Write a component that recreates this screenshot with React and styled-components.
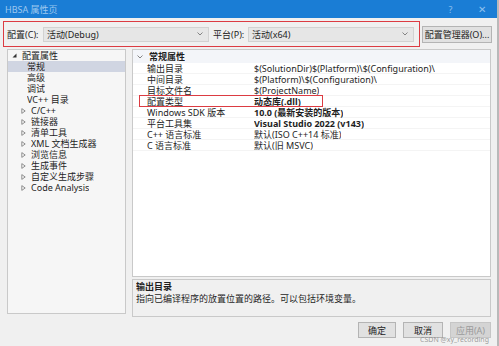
import React from "react";
import styled, { createGlobalStyle } from "styled-components";

const Global = createGlobalStyle`
  html, body { margin: 0; padding: 0; background: #f0f0f0; }
  body { font-family: "Segoe UI", "Noto Sans", "Noto Sans CJK SC", sans-serif; font-size: 9px; color: #1e1e1e; }
  * { box-sizing: border-box; }
`;

const Window = styled.div`
  position: relative;
  width: 499px;
  height: 346px;
  background: #f0f0f0;
  border-right: 2px solid #b9b9b9;
  display: flex;
  flex-direction: column;
  overflow: hidden;
`;

const TitleBar = styled.div`
  height: 18px;
  background: #1a7dd5;
  display: flex;
  align-items: center;
  padding: 0 0 0 5px;
  color: #9fc8ef;
  font-size: 9px;
`;

const TitleText = styled.span`
  flex: 1;
`;

const TitleBtn = styled.span`
  width: 31px;
  text-align: center;
  color: #8fc0ef;
  font-size: ${(p) => p.$size || 9}px;
`;

const Toolbar = styled.div`
  display: flex;
  align-items: center;
  padding: 3px 0 0 3px;
  gap: 2px;
  height: 29px;
`;

const Highlight = styled.div`
  display: flex;
  align-items: center;
  width: 417px;
  height: 26px;
  border: 1.5px solid #dc3b42;
  padding: 0 4px 0 3px;
  gap: 4px;
`;

const Label = styled.span`
  white-space: nowrap;
  width: ${(p) => p.$w}px;
`;

const Select = styled.div`
  width: 166px;
  height: 15px;
  background: #e6e6e6;
  border: 1px solid #d2d2d2;
  display: flex;
  align-items: center;
  padding: 0 5px 0 3px;
  justify-content: space-between;
`;

const Button = styled.div`
  height: ${(p) => p.$h || 16}px;
  width: ${(p) => p.$w}px;
  background: ${(p) => (p.$disabled ? "#d4d4d4" : "#e1e1e1")};
  border: 1px solid ${(p) => (p.$disabled ? "#c6c6c6" : "#b4b4b4")};
  color: ${(p) => (p.$disabled ? "#9a9a9a" : "#1e1e1e")};
  display: flex;
  align-items: center;
  justify-content: center;
  white-space: nowrap;
`;

const Body = styled.div`
  display: flex;
  padding: 2px 0 0 7px;
  gap: 6px;
`;

const Tree = styled.div`
  width: 119px;
  height: 265px;
  background: #f6f6f6;
  border: 1px solid #c9c9c9;
`;

const TreeRow = styled.div`
  height: 11px;
  display: flex;
  align-items: center;
  padding-left: ${(p) => p.$indent}px;
  background: ${(p) => (p.$selected ? "#d0d5e2" : "transparent")};
  white-space: nowrap;
`;

const Cell = styled.span`
  display: block;
  height: 11px;
  line-height: 11px;
  overflow: hidden;
  white-space: nowrap;
  width: ${(p) => (p.$w ? `${p.$w}px` : "auto")};
  padding-left: ${(p) => p.$pl || 0}px;
  flex-shrink: 0;
  font-weight: ${(p) => (p.$bold ? 700 : "inherit")};
`;

const Arrow = styled.span`
  width: 6px;
  display: inline-flex;
  align-items: center;
  margin-right: 4px;
`;

const RightCol = styled.div`
  width: 359px;
  display: flex;
  flex-direction: column;
  gap: 2px;
`;

const Grid = styled.div`
  height: 228px;
  background: #ffffff;
  border: 1px solid #c9c9c9;
`;

const GridHeader = styled.div`
  height: 13px;
  display: flex;
  align-items: center;
  padding-left: 4px;
  background: #f3f5f9;
  font-weight: 600;
  gap: 6px;
`;

const GridRow = styled.div`
  position: relative;
  height: 11px;
  display: flex;
  align-items: center;
  border-bottom: 1px solid #f4f4f4;
`;

const RowMark = styled.span`
  position: absolute;
  left: 6px;
  top: -1px;
  width: 184px;
  height: 12px;
  border: 1.5px solid #dc3b42;
  pointer-events: none;
`;

const Desc = styled.div`
  height: 38px;
  border: 1px solid #c9c9c9;
  background: #f0f0f0;
  padding: 1px 0 0 3px;
`;

const DescLine = styled.div`
  height: 12px;
  line-height: 12px;
  overflow: hidden;
  white-space: nowrap;
  font-weight: ${(p) => (p.$bold ? 700 : 400)};
`;

const Footer = styled.div`
  display: flex;
  justify-content: flex-end;
  gap: 7px;
  padding: 5px 6px 0 0;
`;

const Watermark = styled.span`
  position: absolute;
  right: 8px;
  bottom: 2px;
  font-size: 7px;
  line-height: 8px;
  color: rgba(140, 140, 140, 0.85);
  white-space: nowrap;
`;

const Chevron = () => (
  <svg width="6" height="4" viewBox="0 0 6 4">
    <path d="M0.5 0.5 L3 3 L5.5 0.5" fill="none" stroke="#777" strokeWidth="0.9" />
  </svg>
);

const Expanded = () => (
  <svg width="5" height="5" viewBox="0 0 5 5">
    <path d="M4.5 0.5 L4.5 4.5 L0.5 4.5 Z" fill="#333" />
  </svg>
);

const Collapsed = () => (
  <svg width="5" height="6" viewBox="0 0 5 6">
    <path d="M0.8 0.6 L4.2 3 L0.8 5.4 Z" fill="none" stroke="#777" strokeWidth="0.8" />
  </svg>
);

const treeItems = [
  { t: "配置属性", indent: 4, arrow: "exp" },
  { t: "常规", indent: 19, selected: true },
  { t: "高级", indent: 19 },
  { t: "调试", indent: 19 },
  { t: "VC++ 目录", indent: 19 },
  { t: "C/C++", indent: 13, arrow: "col" },
  { t: "链接器", indent: 13, arrow: "col" },
  { t: "清单工具", indent: 13, arrow: "col" },
  { t: "XML 文档生成器", indent: 13, arrow: "col" },
  { t: "浏览信息", indent: 13, arrow: "col" },
  { t: "生成事件", indent: 13, arrow: "col" },
  { t: "自定义生成步骤", indent: 13, arrow: "col" },
  { t: "Code Analysis", indent: 13, arrow: "col" },
];

const props = [
  { k: "输出目录", v: "$(SolutionDir)$(Platform)\\$(Configuration)\\" },
  { k: "中间目录", v: "$(Platform)\\$(Configuration)\\" },
  { k: "目标文件名", v: "$(ProjectName)" },
  { k: "配置类型", v: "动态库(.dll)", bold: true, mark: true },
  { k: "Windows SDK 版本", v: "10.0 (最新安装的版本)", bold: true },
  { k: "平台工具集", v: "Visual Studio 2022 (v143)", bold: true },
  { k: "C++ 语言标准", v: "默认(ISO C++14 标准)" },
  { k: "C 语言标准", v: "默认(旧 MSVC)" },
];

export default function App() {
  return (
    <>
      <Global />
      <Window>
        <TitleBar>
          <TitleText>HBSA 属性页</TitleText>
          <TitleBtn>?</TitleBtn>
          <TitleBtn $size={10}>✕</TitleBtn>
        </TitleBar>
        <Toolbar>
          <Highlight>
            <Label $w={32}>配置(C):</Label>
            <Select>
              <span>活动(Debug)</span>
              <Chevron />
            </Select>
            <Label $w={31}>平台(P):</Label>
            <Select>
              <span>活动(x64)</span>
              <Chevron />
            </Select>
          </Highlight>
          <Button $w={70} $h={17}>配置管理器(O)...</Button>
        </Toolbar>
        <Body>
          <Tree>
            {treeItems.map((it) => (
              <TreeRow key={it.t} $indent={it.indent} $selected={it.selected}>
                {it.arrow && (
                  <Arrow>{it.arrow === "exp" ? <Expanded /> : <Collapsed />}</Arrow>
                )}
                <Cell>{it.t}</Cell>
              </TreeRow>
            ))}
          </Tree>
          <RightCol>
            <Grid>
              <GridHeader>
                <Chevron />
                <Cell>常规属性</Cell>
              </GridHeader>
              {props.map((p) => (
                <GridRow key={p.k}>
                  <Cell $w={121} $pl={14}>{p.k}</Cell>
                  <Cell $bold={p.bold}>{p.v}</Cell>
                  {p.mark && <RowMark />}
                </GridRow>
              ))}
            </Grid>
            <Desc>
              <DescLine $bold>输出目录</DescLine>
              <DescLine>指向已编译程序的放置位置的路径。可以包括环境变量。</DescLine>
            </Desc>
          </RightCol>
        </Body>
        <Footer>
          <Button $w={38}>确定</Button>
          <Button $w={40}>取消</Button>
          <Button $w={41} $disabled>应用(A)</Button>
        </Footer>
        <Watermark>CSDN @xy_recording</Watermark>
      </Window>
    </>
  );
}
